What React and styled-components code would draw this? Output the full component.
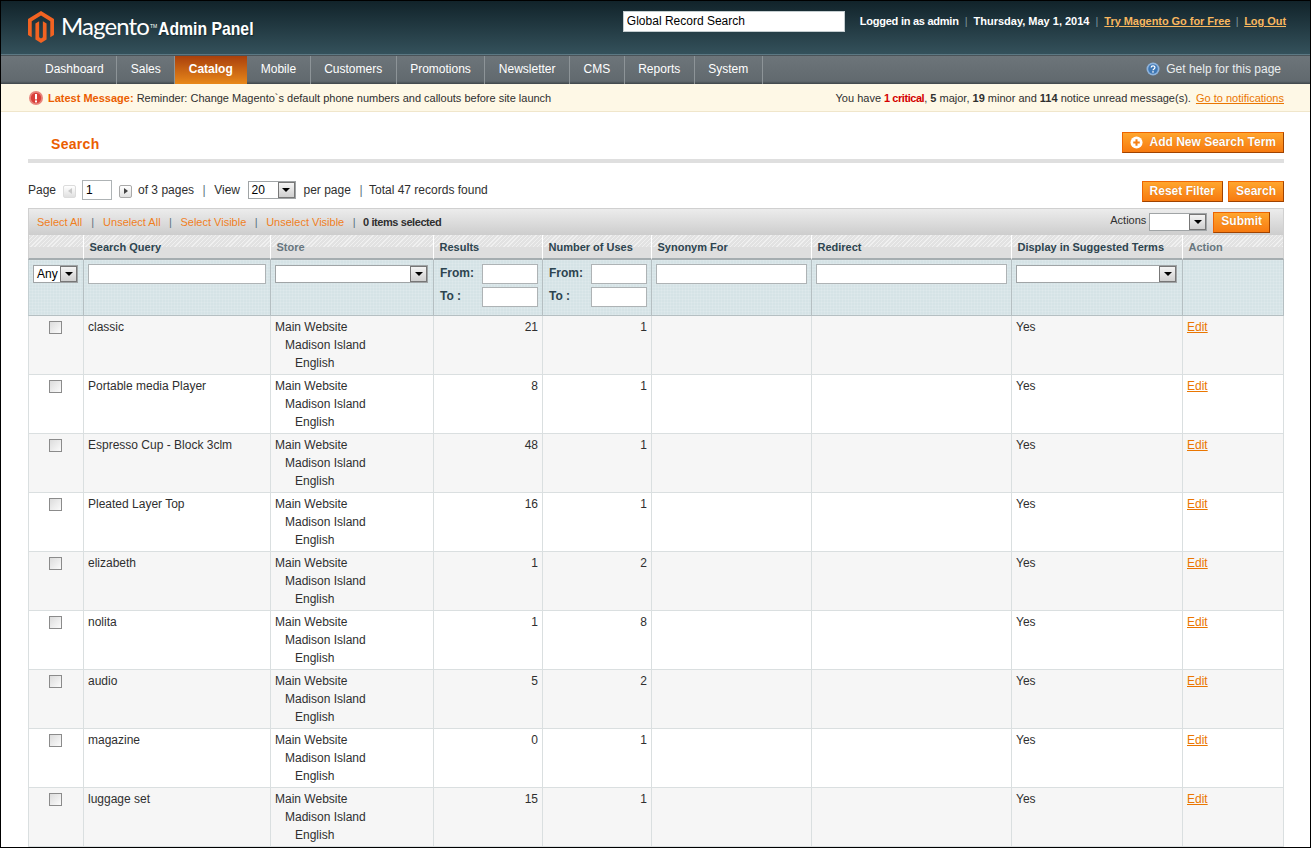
import React from 'react';
import styled, { createGlobalStyle } from 'styled-components';

const GlobalStyle = createGlobalStyle`
  html, body { margin: 0; padding: 0; background: #fff; }
  body { font: 12px/18px "Liberation Sans", Arial, sans-serif; color: #2f2f2f; }
`;

const Page = styled.div`
  box-sizing: border-box;
  width: 1311px;
  height: 848px;
  border: 1px solid #000;
  overflow: hidden;
  background: #fff;
`;

const Header = styled.header`
  box-sizing: border-box;
  height: 54px;
  display: flex;
  justify-content: space-between;
  padding: 0 24px 0 27px;
  background: linear-gradient(#11232a, #34515b);
  border-bottom: 1px solid #5c7883;
`;

const Logo = styled.div`
  display: flex;
  align-items: flex-start;
  padding-top: 10px;
  color: #fff;
  svg { width: 26px; height: 32px; fill: #f26322; margin-right: 7px; }
`;

const LogoName = styled.span`
  font: 400 24px/30px "Lato", sans-serif;
  letter-spacing: -0.9px;
  margin-top: 0;
`;

const LogoTm = styled.span`
  font: 400 5px/6px "Liberation Sans", sans-serif;
  margin: 12px 1px 0 1px;
`;

const LogoPanel = styled.span`
  display: inline-block;
  font: 700 19px/22px "Liberation Sans", sans-serif;
  margin-top: 7px;
  text-shadow: 1px 1px 1px #16282f;
  transform: scaleX(0.83);
  transform-origin: left center;
`;

const HeaderRight = styled.div`
  display: flex;
  align-items: flex-start;
  padding-top: 10px;
`;

const GlobalSearch = styled.input`
  box-sizing: border-box;
  width: 222px;
  height: 21px;
  margin-right: 15px;
  padding: 0 3px 2px;
  border: 1px solid #c4cdd0;
  background: #fff;
  color: #000;
  font: 12px "Liberation Sans", sans-serif;
  &::placeholder { color: #000; opacity: 1; }
`;

const UserLine = styled.div`
  font: 700 11px/20px "Liberation Sans", sans-serif;
  color: #fff;
`;

const UserName = styled.span`
  letter-spacing: -0.25px;
`;

const HeaderSep = styled.span`
  color: #7d939b;
  font-weight: 400;
  margin: 0 ${p => p.$m || 6}px;
`;

const HeaderLink = styled.a`
  color: #f8b75f;
  text-decoration: underline;
  letter-spacing: -0.05px;
`;

const Nav = styled.nav`
  box-sizing: border-box;
  height: 29px;
  display: flex;
  justify-content: space-between;
  padding-left: 30.5px;
  background: linear-gradient(#6d757a, #61696e 90%, #3e4549);
  border-top: 1px solid #4a5358;
`;

const NavList = styled.ul`
  display: flex;
  list-style: none;
  margin: 0;
  padding: 0;
`;

const NavItem = styled.li`
  padding: 0 13.5px;
  font: ${p => (p.$active ? 700 : 400)} 12px/27px "Liberation Sans", sans-serif;
  color: #fff;
  border-right: 1px solid ${p => (p.$active ? 'transparent' : '#8d9498')};
  background: ${p => (p.$active ? 'linear-gradient(#a9400c, #e8881a)' : 'none')};
  &:first-child { padding-right: 12.5px; }
`;

const HelpLink = styled.div`
  display: flex;
  align-items: center;
  gap: 6px;
  height: 26px;
  padding-right: 29px;
  color: #e9edef;
  font-size: 12px;
  svg { width: 14px; height: 14px; }
`;

const Notice = styled.div`
  box-sizing: border-box;
  height: 28px;
  display: flex;
  align-items: center;
  justify-content: space-between;
  padding: 0 26px 0 28px;
  background: #fef8e6;
  border-bottom: 1px solid #f0e6cb;
  font-size: 11px;
  color: #2f2f2f;
`;

const NoticeLeft = styled.div`
  display: flex;
  align-items: center;
  gap: 5px;
  svg { width: 14px; height: 14px; }
`;

const Latest = styled.b`
  color: #eb5e00;
`;

const Critical = styled.b`
  color: #d40000;
  letter-spacing: -0.45px;
`;

const NoticeLink = styled.a`
  color: #ea7601;
  text-decoration: underline;
  margin-left: 2px;
`;

const Content = styled.main`
  padding: 0 26px 0 27px;
`;

const TitleRow = styled.div`
  box-sizing: border-box;
  height: 51px;
  display: flex;
  justify-content: space-between;
  align-items: flex-start;
  padding-top: 20px;
  border-bottom: 4px solid #dfdfdf;
`;

const PageTitle = styled.h3`
  margin: 3px 0 0 23px;
  font: 700 14px/18px "Liberation Sans", sans-serif;
  letter-spacing: 0.3px;
  color: #eb5e00;
`;

const Button = styled.button`
  box-sizing: border-box;
  display: inline-flex;
  align-items: center;
  justify-content: center;
  gap: 7px;
  height: 21px;
  padding: 0 7px 2px;
  border: 1px solid #d55a00;
  border-color: #ed6502 #a04300 #a04300 #ed6502;
  background: linear-gradient(#ffa62e, #f77a10);
  color: #fff;
  font: 700 12px/1 "Liberation Sans", sans-serif;
  text-shadow: 0 0 1px #c85f0a;
  svg { width: 13px; height: 13px; margin-top: 2px; }
`;

const PagerRow = styled.div`
  display: flex;
  justify-content: space-between;
  align-items: flex-start;
  margin-top: 18px;
  height: 21px;
`;

const Pager = styled.div`
  display: flex;
  align-items: center;
  height: 18px;
  font-size: 12px;
  color: #2f2f2f;
`;

const PagerSep = styled.span`
  margin: 0 ${p => p.$right || 8.5}px 0 8.5px;
  color: #5a7380;
`;

const PageStep = styled.span`
  box-sizing: border-box;
  display: inline-flex;
  align-items: center;
  justify-content: center;
  width: 13px;
  height: 13px;
  margin: 2px 6px 0 7px;
  border: 1px solid ${p => (p.$off ? '#dcdcdc' : '#a9a9a9')};
  border-radius: 2px;
  background: linear-gradient(#fff, #e0e0e0);
  &::after {
    content: '';
    border-style: solid;
    border-width: 3px 0 3px 4px;
    border-color: transparent transparent transparent ${p => (p.$off ? '#c8c8c8' : '#444')};
    transform: ${p => (p.$off ? 'scaleX(-1)' : 'none')};
  }
`;

const TextField = styled.input`
  box-sizing: border-box;
  display: block;
  width: ${p => (p.$w ? `${p.$w}px` : '100%')};
  height: 20px;
  padding: 0 3px;
  border: 1px solid #aeb3b5;
  background: #fff;
  font: 12px "Liberation Sans", sans-serif;
  color: #000;
`;

const SelectBox = styled.div`
  box-sizing: border-box;
  display: flex;
  align-items: center;
  justify-content: space-between;
  flex: none;
  width: ${p => p.$w}px;
  height: 18px;
  margin: ${p => p.$margin || 0};
  padding: 0 0 0 3px;
  border: 1px solid #a0a4a6;
  background: #fff;
  font: 12px/16px "Liberation Sans", sans-serif;
  color: #000;
`;

const SelectArrow = styled.span`
  box-sizing: border-box;
  display: flex;
  align-items: center;
  justify-content: center;
  width: 17px;
  height: 16px;
  border: 1px solid #777;
  background: linear-gradient(#f4f4f4, #cfcfcf);
  &::after {
    content: '';
    border-style: solid;
    border-width: 4px 4px 0 4px;
    border-color: #000 transparent transparent transparent;
  }
`;

const Select = ({ w, value, margin }) => (
  <SelectBox $w={w} $margin={margin}>
    <span>{value}</span>
    <SelectArrow />
  </SelectBox>
);

const ButtonRow = styled.div`
  display: flex;
  gap: 5px;
`;

const MassBar = styled.div`
  box-sizing: border-box;
  height: 27px;
  margin-top: 6px;
  display: flex;
  align-items: center;
  justify-content: space-between;
  padding: 0 13px 0 8px;
  background: linear-gradient(#ececec, #cdcdcd);
  border: 1px solid #d0d0d0;
  border-bottom: 0;
  font-size: 11px;
`;

const MassLeft = styled.div`
  display: flex;
  align-items: center;
  height: 26px;
`;

const MassLink = styled.a`
  color: #f07f1e;
`;

const MassSep = styled.span`
  margin: 0 ${p => p.$m || 8.5}px;
  color: #5a7380;
`;

const MassCount = styled.b`
  letter-spacing: -0.42px;
  margin-left: -1px;
`;

const MassRight = styled.div`
  display: flex;
  align-items: center;
  gap: 3px;
  color: #2f2f2f;
`;

const ActionsLabel = styled.span`
  margin: -5px 0 0 0;
`;

const MassSubmit = styled(Button)`
  margin-left: 3px;
  padding: 0 7px 2px;
`;

const Grid = styled.table`
  width: 1256px;
  table-layout: fixed;
  border-collapse: separate;
  border-spacing: 0;
`;

const HeadCell = styled.th`
  box-sizing: border-box;
  height: 25px;
  padding: 0 0 0 5.5px;
  text-align: left;
  font: 700 11px/22px "Liberation Sans", sans-serif;
  color: ${p => (p.$muted ? '#67767e' : '#2d444f')};
  border-right: 1px solid #fff;
  border-bottom: 2px solid #a5adb0;
  background:
    repeating-linear-gradient(135deg, #f0f0f0 0 1px, #e2e2e2 1px 3px) top / 100% 12px no-repeat,
    #dedede;
  &:first-child { border-left: 1px solid #d0d0d0; }
  &:last-child { border-right: 1px solid #d0d0d0; }
`;

const FilterCell = styled.td`
  box-sizing: border-box;
  height: 56px;
  padding: 4px 4px 0 4px;
  vertical-align: top;
  border-right: 1px solid #b5bfc2;
  border-bottom: 1px solid #b5bfc2;
  background:
    repeating-linear-gradient(0deg, rgba(255, 255, 255, 0.12) 0 1px, transparent 1px 3px),
    repeating-linear-gradient(90deg, rgba(255, 255, 255, 0.12) 0 1px, transparent 1px 3px),
    #d5e3e6;
  &:first-child { border-left: 1px solid #c4cfd2; }
`;

const FilterSelectWrap = styled.div`
  padding-top: 1px;
`;

const RangeLine = styled.div`
  display: flex;
  justify-content: space-between;
  align-items: flex-start;
  padding-left: 2px;
  margin-bottom: 3px;
  font: 700 12px/18px "Liberation Sans", sans-serif;
  color: #2d444f;
`;

const Row = styled.tr`
  background: ${p => (p.$odd ? '#f6f6f6' : '#fff')};
`;

const Cell = styled.td`
  box-sizing: border-box;
  height: 59px;
  padding: 2px 4px;
  vertical-align: top;
  text-align: ${p => p.$align || 'left'};
  border-right: 1px solid #dadfe0;
  border-bottom: 1px solid #dadfe0;
  color: #2f2f2f;
  &:first-child { border-left: 1px solid #dadfe0; }
`;

const CheckCell = styled(Cell)`
  padding: 5px 0 0 20px;
`;

const Check = styled.input.attrs({ type: 'checkbox' })`
  appearance: none;
  display: block;
  box-sizing: border-box;
  width: 13px;
  height: 13px;
  margin: 0;
  border: 1px solid #8b8b8b;
  background: linear-gradient(135deg, #dcdcdc, #fbfbfb);
`;

const StoreLine = styled.div`
  padding-left: ${p => p.$level * 10}px;
`;

const EditLink = styled.a`
  color: #ea7601;
  text-decoration: underline;
`;

const Marker = () => (
  <svg viewBox="1.6 0 20.8 24" preserveAspectRatio="none">
    <path d="M12 24l-4.455-2.572v-12l2.97-1.715v12.001l1.485.902 1.485-.902V7.713l2.97 1.715v12L12 24zM22.391 6v12l-2.969 1.714V7.713L12 3.43 4.578 7.713v12L1.609 18V6L12 0l10.391 6z" />
  </svg>
);

const columns = [56, 187, 163, 109, 109, 160, 200, 171, 101];

const headers = [
  { label: '' },
  { label: 'Search Query' },
  { label: 'Store', muted: true },
  { label: 'Results' },
  { label: 'Number of Uses' },
  { label: 'Synonym For' },
  { label: 'Redirect' },
  { label: 'Display in Suggested Terms' },
  { label: 'Action', muted: true },
];

const terms = [
  ['classic', 21, 1],
  ['Portable media Player', 8, 1],
  ['Espresso Cup - Block 3clm', 48, 1],
  ['Pleated Layer Top', 16, 1],
  ['elizabeth', 1, 2],
  ['nolita', 1, 8],
  ['audio', 5, 2],
  ['magazine', 0, 1],
  ['luggage set', 15, 1],
];

const navItems = ['Dashboard', 'Sales', 'Catalog', 'Mobile', 'Customers', 'Promotions', 'Newsletter', 'CMS', 'Reports', 'System'];

const Range = () => (
  <>
    <RangeLine>From: <TextField $w={56} /></RangeLine>
    <RangeLine>To : <TextField $w={56} /></RangeLine>
  </>
);

export default function App() {
  return (
    <Page>
      <GlobalStyle />
      <Header>
        <Logo>
          <Marker />
          <LogoName>Magento</LogoName>
          <LogoTm>TM</LogoTm>
          <LogoPanel>Admin Panel</LogoPanel>
        </Logo>
        <HeaderRight>
          <GlobalSearch placeholder="Global Record Search" />
          <UserLine>
            <UserName>Logged in as admin</UserName><HeaderSep>|</HeaderSep>Thursday, May 1, 2014<HeaderSep>|</HeaderSep>
            <HeaderLink>Try Magento Go for Free</HeaderLink><HeaderSep $m={5.5}>|</HeaderSep>
            <HeaderLink>Log Out</HeaderLink>
          </UserLine>
        </HeaderRight>
      </Header>
      <Nav>
        <NavList>
          {navItems.map((item) => (
            <NavItem key={item} $active={item === 'Catalog'}>{item}</NavItem>
          ))}
        </NavList>
        <HelpLink>
          <svg viewBox="0 0 14 14">
            <circle cx="7" cy="7" r="6.5" fill="#8fb4dc" />
            <circle cx="7" cy="7" r="4.8" fill="#3f78b5" />
            <path d="M5.2 5.6c0-2.3 3.7-2.3 3.7-.1 0 1.4-1.9 1.4-1.9 2.8" fill="none" stroke="#fff" strokeWidth="1.3" />
            <rect x="6.3" y="9.2" width="1.4" height="1.4" fill="#fff" />
          </svg>
          Get help for this page
        </HelpLink>
      </Nav>
      <Notice>
        <NoticeLeft>
          <svg viewBox="0 0 14 14">
            <circle cx="7" cy="7" r="7" fill="#e8837b" />
            <circle cx="7" cy="7" r="5.2" fill="#d9403a" />
            <rect x="6" y="3" width="2" height="5.4" fill="#fff" />
            <rect x="6" y="9.4" width="2" height="2" fill="#fff" />
          </svg>
          <span><Latest>Latest Message:</Latest> Reminder: Change Magento`s default phone numbers and callouts before site launch</span>
        </NoticeLeft>
        <div>
          You have <Critical>1 critical</Critical>, <b>5</b> major, <b>19</b> minor and <b>114</b> notice unread message(s). <NoticeLink>Go to notifications</NoticeLink>
        </div>
      </Notice>
      <Content>
        <TitleRow>
          <PageTitle>Search</PageTitle>
          <Button>
            <svg viewBox="0 0 14 14">
              <circle cx="7" cy="7" r="6.5" fill="#fff" />
              <path d="M7 3.5v7M3.5 7h7" stroke="#f57f14" strokeWidth="2.2" />
            </svg>
            Add New Search Term
          </Button>
        </TitleRow>
        <PagerRow>
          <Pager>
            Page <PageStep $off /> <TextField $w={30} defaultValue="1" /> <PageStep /> of 3 pages
            <PagerSep>|</PagerSep>View
            <Select w={48} value="20" margin="0 8px 0 7.5px" />
            per page<PagerSep $right={6.5}>|</PagerSep>Total 47 records found
          </Pager>
          <ButtonRow>
            <Button>Reset Filter</Button>
            <Button>Search</Button>
          </ButtonRow>
        </PagerRow>
        <MassBar>
          <MassLeft>
            <MassLink>Select All</MassLink><MassSep $m={9}>|</MassSep>
            <MassLink>Unselect All</MassLink><MassSep>|</MassSep>
            <MassLink>Select Visible</MassLink><MassSep>|</MassSep>
            <MassLink>Unselect Visible</MassLink><MassSep>|</MassSep>
            <MassCount>0 items selected</MassCount>
          </MassLeft>
          <MassRight>
            <ActionsLabel>Actions</ActionsLabel>
            <Select w={58} value="" />
            <MassSubmit>Submit</MassSubmit>
          </MassRight>
        </MassBar>
        <Grid>
          <colgroup>
            {columns.map((width, i) => <col key={i} width={width} />)}
          </colgroup>
          <thead>
            <tr>
              {headers.map((h, i) => <HeadCell key={i} $muted={h.muted}>{h.label}</HeadCell>)}
            </tr>
            <tr>
              <FilterCell><FilterSelectWrap><Select w={45} value="Any" /></FilterSelectWrap></FilterCell>
              <FilterCell><TextField /></FilterCell>
              <FilterCell><FilterSelectWrap><Select w={153} value="" /></FilterSelectWrap></FilterCell>
              <FilterCell><Range /></FilterCell>
              <FilterCell><Range /></FilterCell>
              <FilterCell><TextField /></FilterCell>
              <FilterCell><TextField /></FilterCell>
              <FilterCell><FilterSelectWrap><Select w={161} value="" /></FilterSelectWrap></FilterCell>
              <FilterCell />
            </tr>
          </thead>
          <tbody>
            {terms.map(([query, results, uses], i) => (
              <Row key={query} $odd={i % 2 === 0}>
                <CheckCell><Check /></CheckCell>
                <Cell>{query}</Cell>
                <Cell>
                  <StoreLine $level={0}>Main Website</StoreLine>
                  <StoreLine $level={1}>Madison Island</StoreLine>
                  <StoreLine $level={2}>English</StoreLine>
                </Cell>
                <Cell $align="right">{results}</Cell>
                <Cell $align="right">{uses}</Cell>
                <Cell />
                <Cell />
                <Cell>Yes</Cell>
                <Cell><EditLink>Edit</EditLink></Cell>
              </Row>
            ))}
          </tbody>
        </Grid>
      </Content>
    </Page>
  );
}
